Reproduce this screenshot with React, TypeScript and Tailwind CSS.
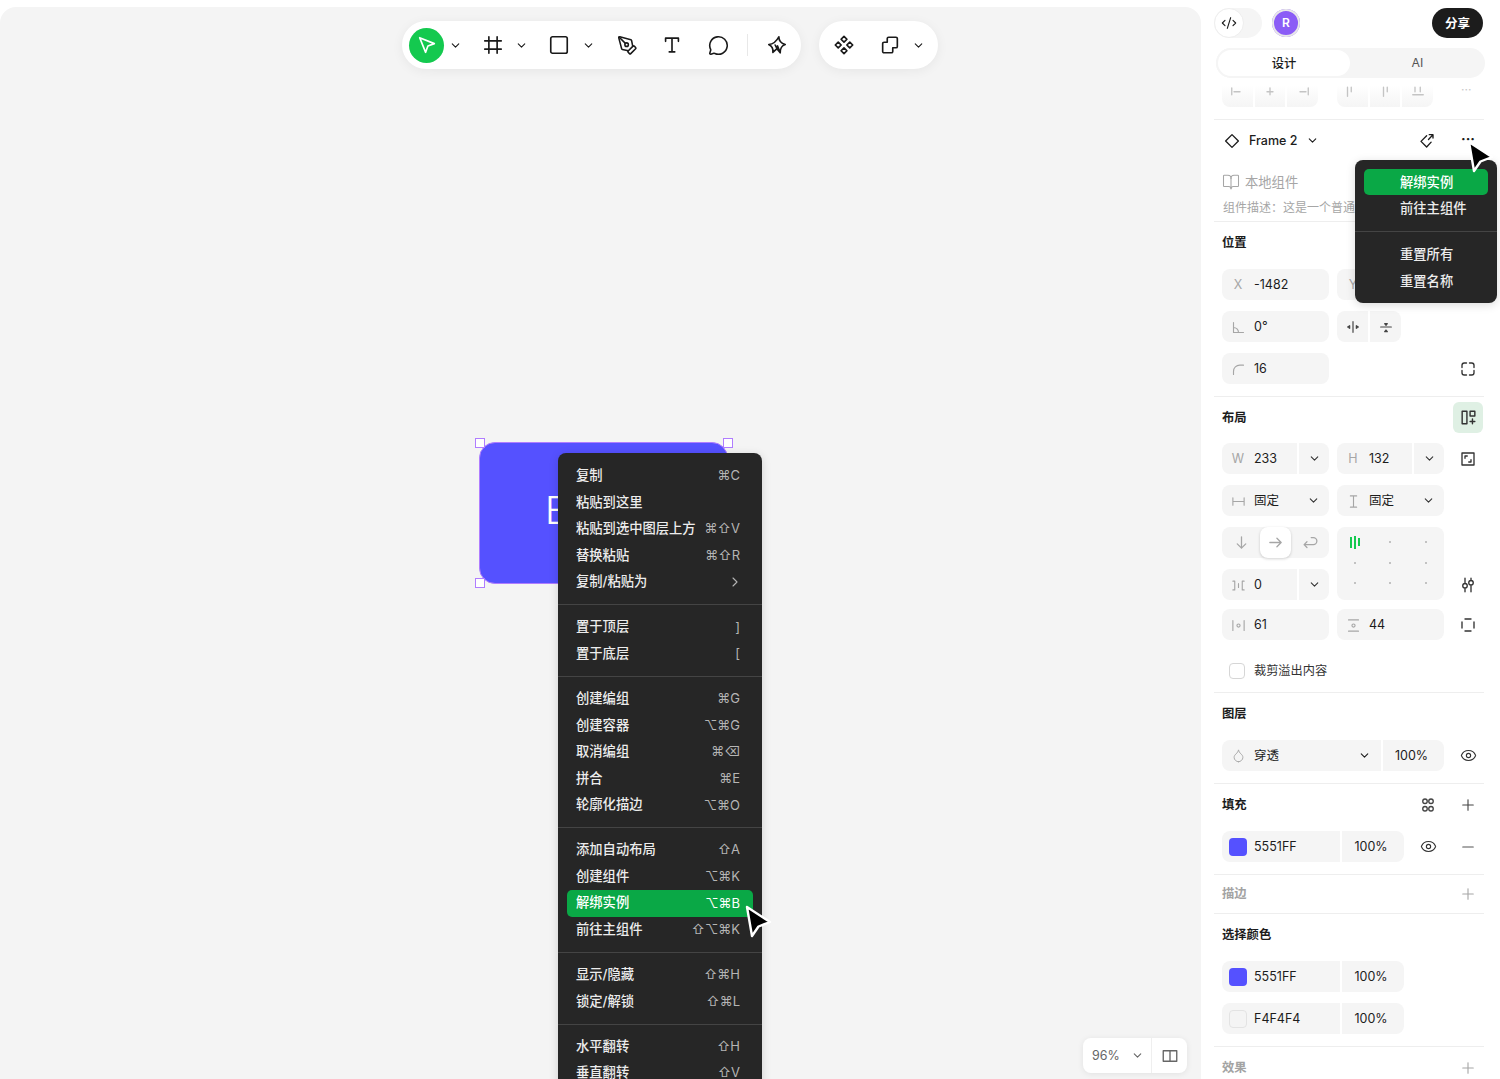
import type { ReactNode } from "react"
import { BookOpen, ChevronDown, ChevronRight, CodeXml, Droplet, Eye, MessageCircle, Minus, PenTool, Plus, Square } from "lucide-react"

const font = "font-['Inter','Noto_Sans_CJK_SC',sans-serif]"

function Svg({ size = 16, className = "", children }: { size?: number; className?: string; children: ReactNode }) {
  return (
    <svg width={size} height={size} viewBox="0 0 24 24" fill="none" stroke="currentColor" strokeWidth={1.8} strokeLinecap="round" strokeLinejoin="round" className={`shrink-0 ${className}`}>
      {children}
    </svg>
  )
}

function Chevron({ className = "" }: { className?: string }) {
  return <ChevronDown size={13} strokeWidth={2} className={`shrink-0 ${className}`} />
}

function Field({ label, icon, value, chevron, className = "" }: { label?: string; icon?: ReactNode; value: string; chevron?: "split" | "plain"; className?: string }) {
  return (
    <div className={`flex h-[31px] w-[107px] shrink-0 items-center overflow-hidden rounded-lg bg-[#f5f5f5] text-[12.5px] text-[#1c1c1c] ${className}`}>
      <div className="flex w-[32px] shrink-0 items-center justify-center pt-px text-[12.5px] text-[#a6a6a6]">{label ?? icon}</div>
      <div className="flex-1 pt-px">{value}</div>
      {chevron === "split" && (
        <div className="flex h-full w-[32px] items-center justify-center border-l-2 border-white text-[#333]">
          <Chevron />
        </div>
      )}
      {chevron === "plain" && (
        <div className="flex h-full w-[32px] items-center justify-center text-[#333]">
          <Chevron />
        </div>
      )}
    </div>
  )
}

function Slot({ children, className = "" }: { children?: ReactNode; className?: string }) {
  return <div className={`ml-[9px] flex h-[31px] w-[30px] shrink-0 items-center justify-center text-[#333] ${className}`}>{children}</div>
}

function ColorField({ color, value, bordered }: { color: string; value: string; bordered?: boolean }) {
  return (
    <div className="flex h-[31px] w-[182px] shrink-0 items-center overflow-hidden rounded-lg bg-[#f5f5f5] text-[12.5px] text-[#1c1c1c]">
      <div className="flex w-[32px] shrink-0 items-center justify-center">
        <div className={`h-[18px] w-[18px] rounded-[4px] ${color} ${bordered ? "border border-[#e3e3e3]" : ""}`} />
      </div>
      <div className="flex-1 pt-px">{value}</div>
      <div className="flex h-full w-[64px] items-center justify-center border-l-2 border-white pr-[4px] pt-px">100%</div>
    </div>
  )
}

function Section({ className = "", children }: { className?: string; children: ReactNode }) {
  return <div className={`ml-[13px] mr-[16px] border-t border-[#eeeeee] pl-2 ${className}`}>{children}</div>
}

function Heading({ children, muted }: { children: ReactNode; muted?: boolean }) {
  return <div className={`pt-px text-[12.3px] font-semibold ${muted ? "text-[#a3a3a3]" : "text-[#1c1c1c]"}`}>{children}</div>
}

function Cursor({ className = "" }: { className?: string }) {
  return (
    <svg width="30" height="36" viewBox="0 0 30 36" className={className}>
      <path d="M3 2 L26 17 L14.500 21.500 L8 31 Z" fill="#000" stroke="#fff" strokeWidth="2.4" strokeLinejoin="round" />
    </svg>
  )
}

type Item = { label: string; keys?: ReactNode; active?: boolean }

const groups: Item[][] = [
  [
    { label: "复制", keys: "⌘C" },
    { label: "粘贴到这里" },
    { label: "粘贴到选中图层上方", keys: "⌘⇧V" },
    { label: "替换粘贴", keys: "⌘⇧R" },
    { label: "复制/粘贴为", keys: <ChevronRight size={16} strokeWidth={1.6} className="-mr-[3px]" /> },
  ],
  [
    { label: "置于顶层", keys: "]" },
    { label: "置于底层", keys: "[" },
  ],
  [
    { label: "创建编组", keys: "⌘G" },
    { label: "创建容器", keys: "⌥⌘G" },
    { label: "取消编组", keys: "⌘⌫" },
    { label: "拼合", keys: "⌘E" },
    { label: "轮廓化描边", keys: "⌥⌘O" },
  ],
  [
    { label: "添加自动布局", keys: "⇧A" },
    { label: "创建组件", keys: "⌥⌘K" },
    { label: "解绑实例", keys: "⌥⌘B", active: true },
    { label: "前往主组件", keys: "⇧⌥⌘K" },
  ],
  [
    { label: "显示/隐藏", keys: "⇧⌘H" },
    { label: "锁定/解锁", keys: "⇧⌘L" },
  ],
  [
    { label: "水平翻转", keys: "⇧H" },
    { label: "垂直翻转", keys: "⇧V" },
  ],
]

function ContextMenu() {
  return (
    <div className="absolute left-[558px] top-[446px] w-[204px] rounded-t-lg bg-[#262626] pt-[9.700px] shadow-[0_2px_10px_rgba(0,0,0,0.15)]">
      {groups.map((group, i) => (
        <div key={i}>
          {i > 0 && <div className="my-[8.700px] h-px bg-[#444444]" />}
          {group.map((item) => (
            <div
              key={item.label}
              className={`mx-[9px] flex h-[26.600px] items-center justify-between rounded-[5px] pl-[9px] pr-[13px] text-[13.300px] font-medium ${item.active ? "bg-[#0aa846] text-white" : "text-[#ececec]"}`}
            >
              <span>{item.label}</span>
              {item.keys && <span className={`flex items-center font-['Inter','DejaVu_Sans',sans-serif] text-[13px] font-normal ${item.active ? "text-white" : "text-[#b5b5b5]"}`}>{item.keys}</span>}
            </div>
          ))}
        </div>
      ))}
    </div>
  )
}

function Toolbar() {
  return (
    <div className="absolute left-[402px] top-[14px] flex text-[#1a1a1a]">
      <div className="flex h-[48px] w-[399px] items-center rounded-full bg-white shadow-[0_2px_12px_rgba(0,0,0,0.06)]">
        <div className="ml-[7px] flex h-[35px] w-[35px] items-center justify-center rounded-full bg-[#14c94f] text-white">
          <Svg size={22}>
            <path d="M4 4 L20 10.500 L13 13 L10.500 20 Z" />
          </Svg>
        </div>
        <Chevron className="ml-[5px]" />
        <Svg size={22} className="ml-[20px]">
          <path d="M7.500 3v18M16.500 3v18M3 7.500h18M3 16.500h18" />
        </Svg>
        <Chevron className="ml-[11px]" />
        <Square size={22} strokeWidth={1.8} className="ml-[20px]" />
        <Chevron className="ml-[12px]" />
        <PenTool size={21} strokeWidth={1.8} className="ml-[22px]" />
        <Svg size={22} className="ml-[23px]">
          <path d="M5 8V4.500h14V8M12 4.500v15M9 19.500h6" />
        </Svg>
        <MessageCircle size={21} strokeWidth={1.8} className="ml-[25px]" />
        <div className="ml-[18px] h-[22px] w-px bg-[#e8e8e8]" />
        <Svg size={22} className="ml-[18px]">
          <path d="M14 3 C14 7 16 10 21 11.500 C17 13 15.500 15 15.500 20.500 L12 16 L7.500 20 C8 16 7 13.500 3 11.500 C8 11 11.500 8 14 3 Z M12 16 L10 12 M15.500 20.500 L12.500 13" />
        </Svg>
      </div>
      <div className="ml-[18px] flex h-[48px] w-[119px] items-center rounded-full bg-white shadow-[0_2px_12px_rgba(0,0,0,0.06)]">
        <Svg size={22} className="ml-[14px]">
          <path d="M12 2.500 15.200 5.700 12 8.900 8.800 5.700Z M5.700 8.800 8.900 12 5.700 15.200 2.500 12Z M18.300 8.800 21.500 12 18.300 15.200 15.100 12Z M12 15.100 15.200 18.300 12 21.500 8.800 18.300Z" />
        </Svg>
        <Svg size={22} className="ml-[24px]">
          <path d="M9 9V5a1.500 1.500 0 0 1 1.500-1.500h8A1.500 1.500 0 0 1 20 5v8.500a1.500 1.500 0 0 1-1.500 1.500H15v4a1.500 1.500 0 0 1-1.500 1.500h-8A1.500 1.500 0 0 1 4 19v-8.500A1.500 1.500 0 0 1 5.500 9Z" />
        </Svg>
        <Chevron className="ml-[11px]" />
      </div>
    </div>
  )
}

function Handle({ className }: { className: string }) {
  return <div className={`absolute h-[10px] w-[10px] border border-[#b07dff] bg-white ${className}`} />
}

function Canvas() {
  return (
    <div className="relative mt-[7px] h-[1072px] w-[1201px] shrink-0 overflow-hidden rounded-t-2xl bg-[#f4f4f4]">
      <Toolbar />
      <div className="absolute left-[479px] top-[435px] h-[142px] w-[249px] overflow-hidden rounded-2xl border border-[#b07dff] bg-[#5551ff]">
        <div className="pl-[65px] pt-[44px] font-['Inter',sans-serif] text-[38px] font-light leading-[46px] text-white">E</div>
      </div>
      <Handle className="left-[475px] top-[431px]" />
      <Handle className="left-[723px] top-[431px]" />
      <Handle className="left-[475px] top-[571px]" />
      <ContextMenu />
      <Cursor className="absolute left-[744px] top-[898px]" />
      <div className="absolute left-[1083px] top-[1031px] flex h-[35px] w-[104px] items-center rounded-lg bg-white text-[12.500px] text-[#666] shadow-[0_1px_6px_rgba(0,0,0,0.08)]">
        <div className="flex h-full w-[69px] items-center justify-between border-r border-[#efefef] pl-[9px] pr-[7px]">
          <span className="pt-px">96%</span>
          <Chevron />
        </div>
        <div className="flex flex-1 items-center justify-center">
          <Svg size={18}>
            <path d="M3 5h18v14H3z M12 5v14" />
          </Svg>
        </div>
      </div>
    </div>
  )
}

function PanelMenu() {
  return (
    <div className="absolute left-[154px] top-[160px] h-[143px] w-[142px] rounded-lg bg-[#262626] pt-[9px] text-[13.300px] font-medium text-[#ececec] shadow-[0_2px_10px_rgba(0,0,0,0.15)]">
      <div className="mx-[9px] flex h-[26px] items-center rounded-[5px] bg-[#0aa846] pl-[36px] pt-px text-white">解绑实例</div>
      <div className="flex h-[26.600px] items-center pl-[45px] pt-px">前往主组件</div>
      <div className="mb-[9.500px] mt-[9.500px] h-px bg-[#444444]" />
      <div className="flex h-[26.600px] items-center pl-[45px]">重置所有</div>
      <div className="flex h-[26.600px] items-center pl-[45px]">重置名称</div>
    </div>
  )
}

function Panel() {
  const soft = "text-[#a6a6a6]"
  return (
    <div className="relative h-[1079px] flex-1 overflow-hidden bg-white text-[#1c1c1c]">
      {/* Top bar */}
      <div className="mt-[8px] flex h-[30px] items-center pl-[13px] pr-[17px]">
        <div className="h-[30px] w-[48px] rounded-full bg-[#f5f5f5]">
          <div className="flex h-[30px] w-[30px] items-center justify-center rounded-full border border-[#eeeeee] bg-white">
            <CodeXml size={16} strokeWidth={1.7} />
          </div>
        </div>
        <div className="ml-[10px] flex h-[28px] w-[28px] items-center justify-center rounded-full bg-[#8b5cf6] text-[12px] font-semibold text-white ring-2 ring-[#e8e8e8] ring-inset">R</div>
        <div className="ml-auto flex h-[30px] w-[51px] items-center justify-center rounded-full bg-[#1c1c1c] pt-[2px] text-[12.500px] font-semibold text-white">分享</div>
      </div>

      {/* Tabs */}
      <div className="ml-[15px] mt-[10px] flex h-[30px] w-[269px] items-center rounded-full bg-[#f5f5f5] text-[12.300px]">
        <div className="flex h-[30px] w-[136px] items-center justify-center rounded-full border-2 border-[#f5f5f5] bg-white pt-[2px] font-medium">设计</div>
        <div className="flex-1 pr-[2px] pt-px text-center text-[#555]">AI</div>
      </div>

      {/* Alignment row, cut off by the header */}
      <div className="mt-[7px] flex h-[22px] px-[21px]">
        <div className="flex h-[22px] w-[96px] gap-0.5 overflow-hidden rounded-b-lg">
          {["M8 9h8M5 4v9", "M8 9h8M12 4v9", "M8 9h8M19 4v9"].map((d) => (
            <div key={d} className="flex flex-1 justify-center bg-linear-to-b from-white to-[#f5f5f5] text-[#c4c4c4]">
              <Svg size={18}><path d={d} /></Svg>
            </div>
          ))}
        </div>
        <div className="ml-[19px] flex h-[22px] w-[96px] gap-0.5 overflow-hidden rounded-b-lg">
          {["M6 3v12M11 3v6", "M10 3v12M15 3v6", "M8 3v6M15 3v6M5 13h14"].map((d) => (
            <div key={d} className="flex flex-1 justify-center bg-linear-to-b from-white to-[#f5f5f5] text-[#c4c4c4]">
              <Svg size={18}><path d={d} /></Svg>
            </div>
          ))}
        </div>
        <div className="ml-[28px] text-[12px] leading-[10px] text-[#c8c8c8]">···</div>
      </div>

      <div className="ml-[13px] mr-[16px] mt-[12px] border-t border-[#eeeeee]" />

      {/* Instance */}
      <div className="flex h-[41px] items-center pl-[22px] pr-[25px] text-[12.500px] font-medium">
        <Svg size={18}><path d="M12 3.500 20.500 12 12 20.500 3.500 12Z" /></Svg>
        <span className="ml-[8px] pt-px">Frame 2</span>
        <Chevron className="ml-[9px]" />
        <Svg size={18} className="ml-auto mr-[25px]">
          <path d="M11.500 5 4 12.500 11.500 20l6-6.500M14 10l6-6.500M15 3.500h5V8" />
        </Svg>
        <span className="mb-[4px] text-[14px] font-bold leading-none">···</span>
      </div>
      <div className={`mt-[11px] flex h-[20px] items-center pl-[21px] text-[13.300px] ${soft}`}>
        <BookOpen size={18} strokeWidth={1.4} />
        <span className="ml-[5px] pt-px">本地组件</span>
      </div>
      <div className={`mt-[7px] h-[16px] whitespace-nowrap pl-[22px] pt-px text-[12px] leading-[16px] ${soft}`}>组件描述：这是一个普通的组件</div>

      {/* Position */}
      <Section className="mt-[6px] pb-[12px]">
        <div className="flex h-[41px] items-center"><Heading>位置</Heading></div>
        <div className="mt-[6px] flex gap-2">
          <Field label="X" value="-1482" />
          <Field label="Y" value="" />
        </div>
        <div className="mt-[11px] flex gap-2">
          <Field value="0°" icon={<Svg size={15} className="text-[#a6a6a6]"><path d="M4 4v16h16M4 12a8 8 0 0 1 8 8" /></Svg>} />
          <div className="flex h-[31px] w-[64px] overflow-hidden rounded-lg bg-[#f5f5f5] text-[#444]">
            <div className="flex flex-1 items-center justify-center border-r-2 border-white">
              <Svg size={16}><path d="M12 4v16M7 10l-3 2 3 2zM17 10l3 2-3 2z" /></Svg>
            </div>
            <div className="flex flex-1 items-center justify-center">
              <Svg size={16}><path d="M4 12h16M10 7h4l-2 2.500zM10 19h4l-2-2.500z" /></Svg>
            </div>
          </div>
        </div>
        <div className="mt-[11px] flex">
          <Field value="16" icon={<Svg size={15} className="text-[#a6a6a6]"><path d="M4 20v-5a10 10 0 0 1 10-10h6" /></Svg>} />
          <div className="ml-[124px] flex h-[31px] w-[30px] items-center justify-center text-[#333]">
            <Svg size={18}><path d="M4 10V7a3 3 0 0 1 3-3h3M14 4h3a3 3 0 0 1 3 3v3M20 14v3a3 3 0 0 1-3 3h-3M10 20H7a3 3 0 0 1-3-3v-3" /></Svg>
          </div>
        </div>
      </Section>

      {/* Layout */}
      <Section>
        <div className="flex h-[46px] items-start justify-between pt-[5px]">
          <div className="flex h-[31px] items-center"><Heading>布局</Heading></div>
          <div className="mr-px flex h-[31px] w-[30px] items-center justify-center rounded-md bg-[#dff0e4] text-[#333]">
            <Svg size={19}><path d="M4 4h6v16H4zM14 4h6v6h-6zM17 14v6M14 17h6" /></Svg>
          </div>
        </div>
        <div className="flex">
          <Field label="W" value="233" chevron="split" />
          <Field label="H" value="132" chevron="split" className="ml-2" />
          <Slot>
            <Svg size={18}><path d="M4 4h16v16H4zM8 11V8h3M16 13v3h-3" /></Svg>
          </Slot>
        </div>
        <div className="mt-[11px] flex gap-2">
          <Field value="固定" chevron="plain" icon={<Svg size={15} className="text-[#a6a6a6]"><path d="M3 6v12M21 6v12M3 12h18" /></Svg>} />
          <Field value="固定" chevron="plain" icon={<Svg size={15} className="text-[#a6a6a6]"><path d="M7 3h10M7 21h10M12 3v18" /></Svg>} />
        </div>
        <div className="mt-[11px] flex">
          <div className="flex w-[107px] shrink-0 flex-col gap-[11px]">
            <div className={`flex h-[31px] items-center rounded-lg bg-[#f5f5f5] ${soft}`}>
              <div className="flex h-full flex-1 items-center justify-center"><Svg size={17}><path d="M12 4v16M6 14l6 6 6-6" /></Svg></div>
              <div className="flex h-full w-[31px] items-center justify-center rounded-lg bg-white shadow-[0_1px_3px_rgba(0,0,0,0.18)]"><Svg size={17}><path d="M4 12h16M14 6l6 6-6 6" /></Svg></div>
              <div className="flex h-full flex-1 items-center justify-center"><Svg size={17}><path d="M3 15h13a5 5 0 0 0 0-10h-3M7 11l-4 4 4 4" /></Svg></div>
            </div>
            <Field value="0" chevron="split" icon={<Svg size={15} className="text-[#a6a6a6]"><path d="M3 5h3v14H3M21 5h-3v14h3M12 9v6" /></Svg>} />
          </div>
          <div className="ml-2 grid h-[73px] w-[107px] shrink-0 grid-cols-3 grid-rows-[20.5px_20.5px_20.5px] rounded-lg bg-[#f5f5f5] pt-[5px]">
            <div className="flex items-center justify-center gap-[2px]">
              <div className="h-[11px] w-[2px] bg-[#14c94f]" />
              <div className="h-[13px] w-[2px] bg-[#14c94f]" />
              <div className="h-[8px] w-[2px] bg-[#14c94f]" />
            </div>
            {[0, 1, 2, 3, 4, 5, 6, 7].map((n) => (
              <div key={n} className="flex items-center justify-center">
                <div className="h-[2px] w-[2px] rounded-full bg-[#b0b0b0]" />
              </div>
            ))}
          </div>
          <Slot className="self-end">
            <Svg size={18}><path d="M8 3v7M8 16v5M16 3v3M16 12v9M8 10a3 3 0 1 0 0 6 3 3 0 0 0 0-6ZM16 6a3 3 0 1 0 0 6 3 3 0 0 0 0-6Z" /></Svg>
          </Slot>
        </div>
        <div className="mt-[9px] flex gap-2">
          <Field value="61" icon={<Svg size={15} className="text-[#a6a6a6]"><path d="M3 4v16M21 4v16M12 9.500a2.500 2.500 0 1 0 0 5 2.500 2.500 0 0 0 0-5Z" /></Svg>} />
          <Field value="44" icon={<Svg size={15} className="text-[#a6a6a6]"><path d="M4 3h16M4 21h16M12 9.500a2.500 2.500 0 1 0 0 5 2.500 2.500 0 0 0 0-5Z" /></Svg>} />
          <Slot className="!ml-px">
            <Svg size={18}><path d="M4 8v8M20 8v8M8 4h8M8 20h8" /></Svg>
          </Slot>
        </div>
        <div className="flex items-center pb-[13px] pl-[7px] pt-[22px] text-[12.200px] text-[#333]">
          <div className="h-[16px] w-[16px] rounded-[4px] border border-[#d6d6d6] bg-white" />
          <span className="ml-[9px] pt-px leading-[16px]">裁剪溢出内容</span>
        </div>
      </Section>

      {/* Layer */}
      <Section className="pb-[12px]">
        <div className="flex h-[41px] items-center"><Heading>图层</Heading></div>
        <div className="mt-[6px] flex items-center">
          <div className="flex h-[31px] w-[222px] shrink-0 overflow-hidden rounded-lg bg-[#f5f5f5] text-[12.500px]">
            <div className="flex w-[32px] items-center justify-center text-[#a6a6a6]"><Droplet size={15} strokeWidth={1.5} /></div>
            <div className="flex flex-1 items-center justify-between pr-[10px]">
              <span className="pt-px">穿透</span>
              <Chevron />
            </div>
            <div className="flex w-[63px] items-center justify-center border-l-2 border-white pr-[4px] pt-px">100%</div>
          </div>
          <Slot><Eye size={17} strokeWidth={1.6} /></Slot>
        </div>
      </Section>

      {/* Fill */}
      <Section className="pb-[12px]">
        <div className="flex h-[41px] items-center">
          <Heading>填充</Heading>
          <div className="ml-auto mr-[7px] flex text-[#444]">
            <Svg size={18} className="mr-[22px]"><path d="M8 4a3 3 0 1 0 0 6 3 3 0 0 0 0-6ZM16 4a3 3 0 1 0 0 6 3 3 0 0 0 0-6ZM8 14a3 3 0 1 0 0 6 3 3 0 0 0 0-6ZM16 14a3 3 0 1 0 0 6 3 3 0 0 0 0-6Z" /></Svg>
            <Plus size={18} strokeWidth={1.5} />
          </div>
        </div>
        <div className="mt-[6px] flex items-center">
          <ColorField color="bg-[#5551ff]" value="5551FF" />
          <div className="ml-[9px] flex w-[30px] justify-center text-[#333]"><Eye size={17} strokeWidth={1.6} /></div>
          <div className="ml-[10px] flex w-[30px] justify-center text-[#555]"><Minus size={18} strokeWidth={1.5} /></div>
        </div>
      </Section>

      {/* Stroke */}
      <Section>
        <div className="flex h-[38px] items-center justify-between">
          <Heading muted>描边</Heading>
          <Plus size={18} strokeWidth={1.5} className="mr-[7px] text-[#a6a6a6]" />
        </div>
      </Section>

      {/* Selection colors */}
      <Section className="pb-[12px]">
        <div className="flex h-[41px] items-center"><Heading>选择颜色</Heading></div>
        <div className="mt-[6px]"><ColorField color="bg-[#5551ff]" value="5551FF" /></div>
        <div className="mt-[11px]"><ColorField color="bg-[#f4f4f4]" value="F4F4F4" bordered /></div>
      </Section>

      {/* Effects */}
      <Section>
        <div className="flex h-[41px] items-center justify-between">
          <Heading muted>效果</Heading>
          <Plus size={18} strokeWidth={1.5} className="mr-[7px] text-[#a6a6a6]" />
        </div>
      </Section>

      <PanelMenu />
      <Cursor className="absolute left-[265px] top-[140px]" />
    </div>
  )
}

export default function App() {
  return (
    <div className={`flex h-[1079px] w-[1500px] overflow-hidden bg-white ${font}`}>
      <Canvas />
      <Panel />
    </div>
  )
}
